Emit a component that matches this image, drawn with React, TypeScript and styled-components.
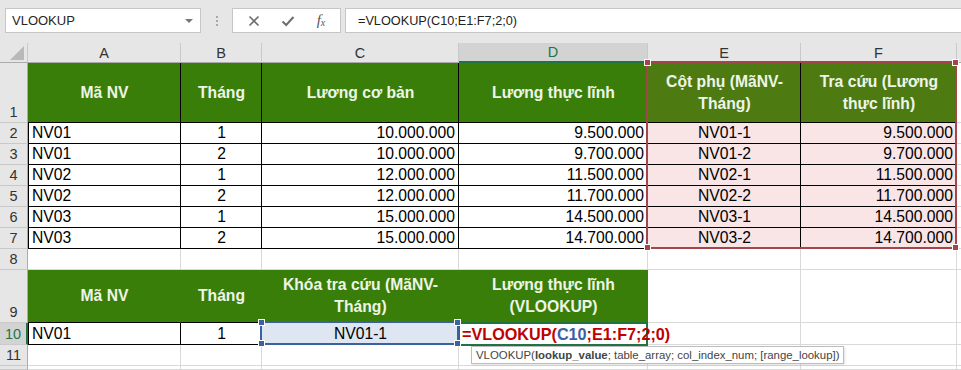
import React from 'react';
import styled, { createGlobalStyle, css } from 'styled-components';

const GlobalStyle = createGlobalStyle`
  html, body {
    margin: 0;
    padding: 0;
    background: #ffffff;
  }
  body {
    width: 961px;
    height: 370px;
    overflow: hidden;
    font-family: "Liberation Sans", Arial, sans-serif;
  }
`;

const GREEN = '#3a7e0a';
const GREEN_SEL = '#4d7b12';
const PINK = '#f9e5e6';
const GRID = '#d9d9d9';
const RANGE_RED = '#a3464b';
const REF_BLUE = '#3b62a0';
const XL_GREEN = '#217346';

const Window = styled.div`
  width: 961px;
  height: 370px;
  display: flex;
  flex-direction: column;
  overflow: hidden;
  background: #fff;
`;

const FormulaBar = styled.div`
  height: 43px;
  flex: none;
  box-sizing: border-box;
  background: #e6e6e6;
  display: flex;
  align-items: flex-start;
  padding: 8px 0 0 5px;
`;

const NameBox = styled.div`
  width: 196px;
  height: 25px;
  box-sizing: border-box;
  background: #fff;
  border: 1px solid #c6c6c6;
  display: flex;
  align-items: center;
  justify-content: space-between;
  padding: 0 7px 0 6px;
  font-size: 13px;
  color: #262626;
`;

const Caret = styled.span`
  width: 0;
  height: 0;
  border-left: 4px solid transparent;
  border-right: 4px solid transparent;
  border-top: 4px solid #777;
`;

const Grip = styled.div`
  width: 31px;
  height: 25px;
  display: flex;
  flex-direction: column;
  align-items: center;
  justify-content: center;
  gap: 2px;
`;

const GripDot = styled.span`
  width: 2px;
  height: 2px;
  background: #a8a8a8;
`;

const ActionBox = styled.div`
  width: 109px;
  height: 25px;
  box-sizing: border-box;
  background: #fff;
  border: 1px solid #c6c6c6;
  display: flex;
  align-items: center;
  justify-content: space-around;
  padding: 0 4px;
  margin-right: 4px;
`;

const Fx = styled.span`
  font-family: "Liberation Serif", "Times New Roman", serif;
  font-style: italic;
  font-size: 15px;
  color: #555;
  line-height: 1;

  sub {
    font-size: 10px;
    vertical-align: -1px;
  }
`;

const FormulaInput = styled.div`
  flex: 1;
  height: 25px;
  box-sizing: border-box;
  background: #fff;
  border: 1px solid #c6c6c6;
  border-right: none;
  display: flex;
  align-items: center;
  padding-left: 12px;
  font-size: 12.7px;
  color: #222;
`;

const sheetTemplate = css`
  display: grid;
  grid-template-columns: 28px 153px 81px 197px 189px 153px 156px 1fr;
  grid-template-rows: 20px 60px repeat(7, 21px) 53px 22px 21px 1fr;
`;

const SheetArea = styled.div`
  flex: 1;
  position: relative;
  display: flex;
`;

const Sheet = styled.div`
  ${sheetTemplate}
  flex: 1;
  font-size: 15.7px;
  color: #000;
`;

const SelectionLayer = styled.div`
  ${sheetTemplate}
  position: absolute;
  inset: 0;
  pointer-events: none;
`;

const ColHead = styled.div<{ $sel?: boolean }>`
  box-sizing: border-box;
  background: ${(p) => (p.$sel ? '#d3d3d3' : '#e6e6e6')};
  border-right: 1px solid #c9c9c9;
  border-bottom: ${(p) => (p.$sel ? `2px solid ${XL_GREEN}` : '1px solid #ababab')};
  color: ${(p) => (p.$sel ? XL_GREEN : '#333')};
  font-size: 14.5px;
  display: flex;
  align-items: center;
  justify-content: center;
`;

const Corner = styled.div`
  box-sizing: border-box;
  background: #e6e6e6;
  border-right: 1px solid #c9c9c9;
  border-bottom: 1px solid #ababab;
  display: flex;
  align-items: flex-end;
  justify-content: flex-end;
  padding: 0 3px 2px 0;

  &::after {
    content: '';
    width: 14px;
    height: 14px;
    background: #b9b9b9;
    clip-path: polygon(100% 0, 100% 100%, 0 100%);
  }
`;

const RowHead = styled.div<{ $sel?: boolean; $bottom?: boolean }>`
  box-sizing: border-box;
  background: ${(p) => (p.$sel ? '#d3d3d3' : '#e6e6e6')};
  border-right: ${(p) => (p.$sel ? `2px solid ${XL_GREEN}` : '1px solid #ababab')};
  border-bottom: 1px solid #c9c9c9;
  color: ${(p) => (p.$sel ? XL_GREEN : '#333')};
  font-size: 14.5px;
  display: flex;
  justify-content: center;
  align-items: ${(p) => (p.$bottom ? 'flex-end' : 'center')};
  padding-bottom: ${(p) => (p.$bottom ? '2px' : '0')};
`;

type Align = 'left' | 'center' | 'right';

const Cell = styled.div<{
  $bg?: string;
  $r?: string;
  $b?: string;
  $align?: Align;
  $head?: boolean;
  $lead?: boolean;
}>`
  box-sizing: border-box;
  min-width: 0;
  background: ${(p) => p.$bg || '#fff'};
  border-right: 1px solid ${(p) => p.$r || GRID};
  border-bottom: 1px solid ${(p) => p.$b || GRID};
  box-shadow: ${(p) => (p.$lead ? 'inset 1px 0 0 #000' : 'none')};
  display: flex;
  align-items: center;
  justify-content: ${(p) =>
    p.$align === 'center' ? 'center' : p.$align === 'right' ? 'flex-end' : 'flex-start'};
  text-align: ${(p) => p.$align || 'left'};
  padding: 0 3px 0 4px;
  white-space: nowrap;
  overflow: hidden;
  font-weight: ${(p) => (p.$head ? 700 : 400)};
  color: ${(p) => (p.$head ? '#eef5e7' : '#000')};
  line-height: ${(p) => (p.$head ? '22px' : '20px')};
`;

const EditCell = styled.div`
  box-sizing: border-box;
  position: relative;
  z-index: 3;
  background: #fff;
  border: 2px solid ${XL_GREEN};
  margin: -1px 0 -1px -1px;
  display: flex;
  align-items: center;
  padding-left: 2px;
  white-space: nowrap;
  overflow: visible;
  font-weight: 700;
  font-size: 16.2px;
`;

const Tok = styled.span<{ $c: string }>`
  color: ${(p) => p.$c};
`;

const Tip = styled.div`
  position: absolute;
  left: 11px;
  top: 22px;
  height: 18px;
  box-sizing: border-box;
  background: #fff;
  border: 1px solid #bdbdbd;
  box-shadow: 1px 1px 2px rgba(0, 0, 0, 0.12);
  padding: 0 4px;
  display: flex;
  align-items: center;
  font-size: 11.4px;
  font-weight: 400;
  color: #444;

  b {
    font-weight: 700;
  }
`;

const Range = styled.div<{ $col: string; $row: string; $color: string; $w: number }>`
  grid-column: ${(p) => p.$col};
  grid-row: ${(p) => p.$row};
  position: relative;
  z-index: 4;
  border: ${(p) => p.$w}px solid ${(p) => p.$color};
  margin: -${(p) => p.$w}px 0 0 -${(p) => p.$w}px;
  color: ${(p) => p.$color};
`;

const Handle = styled.span<{ $x: 'l' | 'r'; $y: 't' | 'b' }>`
  position: absolute;
  width: 5px;
  height: 5px;
  background: currentColor;
  border: 1px solid #fff;
  ${(p) => (p.$x === 'l' ? 'left: -4px;' : 'right: -4px;')}
  ${(p) => (p.$y === 't' ? 'top: -4px;' : 'bottom: -4px;')}
`;

const Handles = () => (
  <>
    <Handle $x="l" $y="t" />
    <Handle $x="r" $y="t" />
    <Handle $x="l" $y="b" />
    <Handle $x="r" $y="b" />
  </>
);

const XIcon = () => (
  <svg width="12" height="12" viewBox="0 0 12 12">
    <path d="M1.5 1.5 L10.5 10.5 M10.5 1.5 L1.5 10.5" stroke="#6e6e6e" strokeWidth="1.6" fill="none" />
  </svg>
);

const CheckIcon = () => (
  <svg width="14" height="12" viewBox="0 0 14 12">
    <path d="M1.5 6.5 L5.2 10 L12.5 2" stroke="#6e6e6e" strokeWidth="2" fill="none" />
  </svg>
);

const data = [
  ['NV01', '1', '10.000.000', '9.500.000', 'NV01-1', '9.500.000'],
  ['NV01', '2', '10.000.000', '9.700.000', 'NV01-2', '9.700.000'],
  ['NV02', '1', '12.000.000', '11.500.000', 'NV02-1', '11.500.000'],
  ['NV02', '2', '12.000.000', '11.700.000', 'NV02-2', '11.700.000'],
  ['NV03', '1', '15.000.000', '14.500.000', 'NV03-1', '14.500.000'],
  ['NV03', '2', '15.000.000', '14.700.000', 'NV03-2', '14.700.000'],
];

const dataAlign: Align[] = ['left', 'center', 'right', 'right', 'center', 'right'];

const Blank = ({ n }: { n: number }) => (
  <>
    {Array.from({ length: n }).map((_, i) => (
      <Cell key={i} />
    ))}
  </>
);

export default function App() {
  return (
    <Window>
      <GlobalStyle />
      <FormulaBar>
        <NameBox>
          <span>VLOOKUP</span>
          <Caret />
        </NameBox>
        <Grip>
          <GripDot />
          <GripDot />
          <GripDot />
        </Grip>
        <ActionBox>
          <XIcon />
          <CheckIcon />
          <Fx>
            f<sub>x</sub>
          </Fx>
        </ActionBox>
        <FormulaInput>=VLOOKUP(C10;E1:F7;2;0)</FormulaInput>
      </FormulaBar>

      <SheetArea>
        <Sheet>
          <Corner />
          {['A', 'B', 'C', 'D', 'E', 'F', ''].map((c) => (
            <ColHead key={c} $sel={c === 'D'}>
              {c}
            </ColHead>
          ))}

          {/* row 1 */}
          <RowHead $bottom>1</RowHead>
          <Cell $head $bg={GREEN} $r="#000" $b="#000" $align="center">Mã NV</Cell>
          <Cell $head $bg={GREEN} $r="#000" $b="#000" $align="center">Tháng</Cell>
          <Cell $head $bg={GREEN} $r="#000" $b="#000" $align="center">Lương cơ bản</Cell>
          <Cell $head $bg={GREEN} $r="#000" $b="#000" $align="center">Lương thực lĩnh</Cell>
          <Cell $head $bg={GREEN_SEL} $r="#000" $b="#000" $align="center">
            Cột phụ (MãNV-
            <br />
            Tháng)
          </Cell>
          <Cell $head $bg={GREEN_SEL} $r="#000" $b="#000" $align="center">
            Tra cứu (Lương
            <br />
            thực lĩnh)
          </Cell>
          <Cell />

          {/* rows 2-7 */}
          {data.map((row, ri) => (
            <React.Fragment key={ri}>
              <RowHead>{ri + 2}</RowHead>
              {row.map((v, ci) => (
                <Cell
                  key={ci}
                  $lead={ci === 0}
                  $bg={ci >= 4 ? PINK : '#fff'}
                  $r="#000"
                  $b="#000"
                  $align={dataAlign[ci]}
                >
                  {v}
                </Cell>
              ))}
              <Cell />
            </React.Fragment>
          ))}

          {/* row 8 */}
          <RowHead>8</RowHead>
          <Blank n={7} />

          {/* row 9 */}
          <RowHead $bottom>9</RowHead>
          <Cell $head $bg={GREEN} $r={GREEN} $b="#000" $align="center">Mã NV</Cell>
          <Cell $head $bg={GREEN} $r={GREEN} $b="#000" $align="center">Tháng</Cell>
          <Cell $head $bg={GREEN} $r={GREEN} $b="#000" $align="center">
            Khóa tra cứu (MãNV-
            <br />
            Tháng)
          </Cell>
          <Cell $head $bg={GREEN} $r={GREEN} $b="#000" $align="center">
            Lương thực lĩnh
            <br />
            (VLOOKUP)
          </Cell>
          <Blank n={3} />

          {/* row 10 */}
          <RowHead $sel>10</RowHead>
          <Cell $lead $r="#000" $b="#000">NV01</Cell>
          <Cell $r="#000" $b="#000" $align="center">1</Cell>
          <Cell $bg="#dde6f1" $align="center">NV01-1</Cell>
          <EditCell>
            <Tok $c="#c00000">=VLOOKUP(</Tok>
            <Tok $c="#3b62a0">C10</Tok>
            <Tok $c="#c00000">;E1:F7;2;0)</Tok>
            <Tip>
              VLOOKUP(<b>lookup_value</b>; table_array; col_index_num; [range_lookup])
            </Tip>
          </EditCell>
          <Blank n={3} />

          {/* row 11 */}
          <RowHead>11</RowHead>
          <Blank n={7} />

          {/* row 12, only its top edge is visible */}
          <RowHead />
          <Blank n={7} />
        </Sheet>

        <SelectionLayer>
          <Range $col="6 / 8" $row="2 / 9" $color={RANGE_RED} $w={2}>
            <Handles />
          </Range>
          <Range $col="4 / 5" $row="11 / 12" $color={REF_BLUE} $w={2}>
            <Handles />
          </Range>
        </SelectionLayer>
      </SheetArea>
    </Window>
  );
}
